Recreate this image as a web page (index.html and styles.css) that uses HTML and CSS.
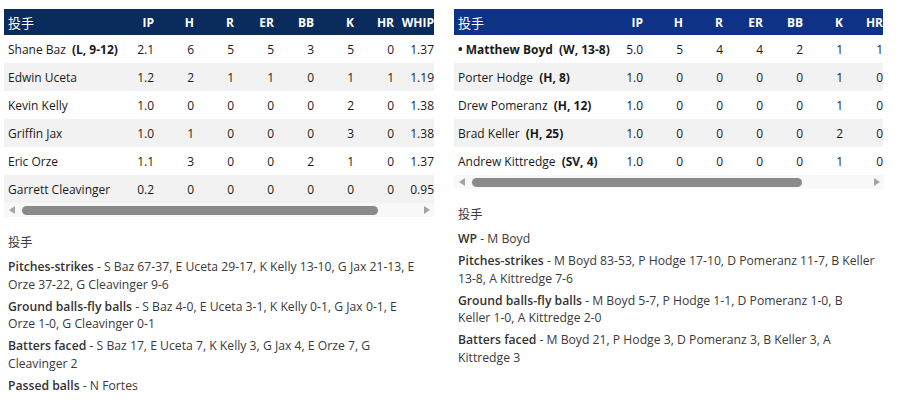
FILE: index.html
```html
<!DOCTYPE html>
<html lang="zh">
<head>
<meta charset="utf-8">
<link rel="stylesheet" href="styles.css">
</head>
<body>
<div class="page">
  <section class="team">
    <div class="scroller">
      <table class="box rays">
        <thead>
          <tr><th class="name">投手</th><th>IP</th><th>H</th><th>R</th><th>ER</th><th>BB</th><th>K</th><th>HR</th><th>WHIP</th></tr>
        </thead>
        <tbody>
          <tr><td class="name">Shane Baz <b class="dec">(L, 9-12)</b></td><td>2.1</td><td>6</td><td>5</td><td>5</td><td>3</td><td>5</td><td>0</td><td>1.37</td></tr>
          <tr><td class="name">Edwin Uceta</td><td>1.2</td><td>2</td><td>1</td><td>1</td><td>0</td><td>1</td><td>1</td><td>1.19</td></tr>
          <tr><td class="name">Kevin Kelly</td><td>1.0</td><td>0</td><td>0</td><td>0</td><td>0</td><td>2</td><td>0</td><td>1.38</td></tr>
          <tr><td class="name">Griffin Jax</td><td>1.0</td><td>1</td><td>0</td><td>0</td><td>0</td><td>3</td><td>0</td><td>1.38</td></tr>
          <tr><td class="name">Eric Orze</td><td>1.1</td><td>3</td><td>0</td><td>0</td><td>2</td><td>1</td><td>0</td><td>1.37</td></tr>
          <tr><td class="name">Garrett Cleavinger</td><td>0.2</td><td>0</td><td>0</td><td>0</td><td>0</td><td>0</td><td>0</td><td>0.95</td></tr>
        </tbody>
      </table>
    </div>
    <div class="hscroll">
      <span class="arrow left"></span>
      <div class="track"><div class="thumb thumb-l"></div></div>
      <span class="arrow right"></span>
    </div>
    <div class="notes notes-away">
      <p class="notes-title">投手</p>
      <p><b>Pitches-strikes</b> - S Baz 67-37, E Uceta 29-17, K Kelly 13-10, G Jax 21-13, E Orze 37-22, G Cleavinger 9-6</p>
      <p><b>Ground balls-fly balls</b> - S Baz 4-0, E Uceta 3-1, K Kelly 0-1, G Jax 0-1, E Orze 1-0, G Cleavinger 0-1</p>
      <p><b>Batters faced</b> - S Baz 17, E Uceta 7, K Kelly 3, G Jax 4, E Orze 7, G Cleavinger 2</p>
      <p><b>Passed balls</b> - N Fortes</p>
    </div>
  </section>

  <section class="team">
    <div class="scroller">
      <table class="box cubs">
        <thead>
          <tr><th class="name">投手</th><th>IP</th><th>H</th><th>R</th><th>ER</th><th>BB</th><th>K</th><th>HR</th></tr>
        </thead>
        <tbody>
          <tr class="current"><td class="name">• Matthew Boyd <b class="dec">(W, 13-8)</b></td><td>5.0</td><td>5</td><td>4</td><td>4</td><td>2</td><td>1</td><td>1</td></tr>
          <tr><td class="name">Porter Hodge <b class="dec">(H, 8)</b></td><td>1.0</td><td>0</td><td>0</td><td>0</td><td>0</td><td>1</td><td>0</td></tr>
          <tr><td class="name">Drew Pomeranz <b class="dec">(H, 12)</b></td><td>1.0</td><td>0</td><td>0</td><td>0</td><td>0</td><td>1</td><td>0</td></tr>
          <tr><td class="name">Brad Keller <b class="dec">(H, 25)</b></td><td>1.0</td><td>0</td><td>0</td><td>0</td><td>0</td><td>2</td><td>0</td></tr>
          <tr><td class="name">Andrew Kittredge <b class="dec">(SV, 4)</b></td><td>1.0</td><td>0</td><td>0</td><td>0</td><td>0</td><td>1</td><td>0</td></tr>
        </tbody>
      </table>
    </div>
    <div class="hscroll">
      <span class="arrow left"></span>
      <div class="track"><div class="thumb thumb-r"></div></div>
      <span class="arrow right"></span>
    </div>
    <div class="notes">
      <p class="notes-title">投手</p>
      <p><b>WP</b> - M Boyd</p>
      <p><b>Pitches-strikes</b> - M Boyd 83-53, P Hodge 17-10, D Pomeranz 11-7, B Keller 13-8, A Kittredge 7-6</p>
      <p><b>Ground balls-fly balls</b> - M Boyd 5-7, P Hodge 1-1, D Pomeranz 1-0, B Keller 1-0, A Kittredge 2-0</p>
      <p><b>Batters faced</b> - M Boyd 21, P Hodge 3, D Pomeranz 3, B Keller 3, A Kittredge 3</p>
    </div>
  </section>
</div>
</body>
</html>
```

FILE: styles.css
```css
* { box-sizing: border-box; }
html, body { margin: 0; padding: 0; background: #fff; }
body {
  font-family: "Open Sans", "Noto Sans CJK SC", sans-serif;
  color: #1a1a1a;
}
.page {
  display: flex;
  gap: 20px;
  padding: 9px 0 0 4px;
}
.team {
  width: 430px;
  flex: none;
}
.scroller {
  width: 430px;
  overflow: hidden;
}
.box {
  border-collapse: collapse;
  table-layout: fixed;
  font-size: 12px;
}
.rays { width: 430px; background: #fff; }
.cubs { width: 429px; }
.box th, .box td {
  width: 40px;
  text-align: right;
  padding: 0;
  white-space: nowrap;
}
.rays th.name, .rays td.name { width: 110px; }
.cubs th.name, .cubs td.name { width: 149px; }
.box .name { text-align: left; padding-left: 4px; }
.box thead tr { height: 26px; color: #fff; }
.rays thead tr { background: #092c5c; }
.cubs thead tr { background: #0e3386; }
.box th { font-weight: 700; font-size: 12px; }
.box th.name { font-weight: 400; font-size: 13px; }
.box tbody tr { height: 28px; }
.box tbody tr:nth-child(even) { background: #f2f2f2; }
.box tbody tr.current .name { font-weight: 700; }
.dec { font-weight: 700; margin-left: 3px; }

.hscroll {
  display: flex;
  align-items: center;
  height: 14px;
  background: #f8f8f8;
  padding: 0 4px;
}
.arrow {
  width: 0;
  height: 0;
  border-top: 4px solid transparent;
  border-bottom: 4px solid transparent;
  flex: none;
}
.arrow.left { border-right: 6px solid #a3a3a3; margin-left: 1px; }
.arrow.right { border-left: 6px solid #a3a3a3; }
.track {
  flex: 1;
  padding: 0 8px 0 7px;
}
.thumb {
  height: 9px;
  border-radius: 5px;
  background: #8a8a8a;
}
.thumb-l { width: 356px; }
.thumb-r { width: 330px; }

.notes {
  padding: 17px 7px 0 4px;
  font-size: 12.2px;
  line-height: 17.5px;
  color: #3a3a3a;
}
.notes-away { padding-right: 10px; }
.notes p { margin: 0 0 4.5px; }
.notes b { font-weight: 600; color: #333; }
.notes .notes-title { margin-bottom: 6.5px; }
```
